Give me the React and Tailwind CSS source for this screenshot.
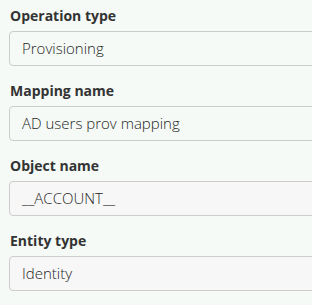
import React from "react";

const fields = [
  { label: "Operation type", value: "Provisioning", editable: true },
  { label: "Mapping name", value: "AD users prov mapping", editable: true },
  { label: "Object name", value: "__ACCOUNT__", editable: false },
  { label: "Entity type", value: "Identity", editable: false },
];

export default function App() {
  return (
    <div
      className="w-[312px] h-[305px] overflow-hidden bg-[#f5faf6] pl-[9px] pt-[6px] text-[#333]"
      style={{ fontFamily: '"Open Sans", sans-serif' }}
    >
      <div className="flex flex-col gap-[15px] w-[340px]">
        {fields.map((f) => (
          <div key={f.label} className="flex flex-col">
            <label className="text-[14px] leading-[20px] font-bold mb-[5px] pl-px">{f.label}</label>
            <div
              className={
                "h-[35px] flex items-center pl-[12px] border border-[#cccccc] rounded-[4px] text-[15px] font-light text-[#1f1f1f] " +
                (f.editable ? "bg-[#f5faf6]" : "bg-[#f7f7f7]")
              }
            >
              {f.value}
            </div>
          </div>
        ))}
      </div>
    </div>
  );
}
